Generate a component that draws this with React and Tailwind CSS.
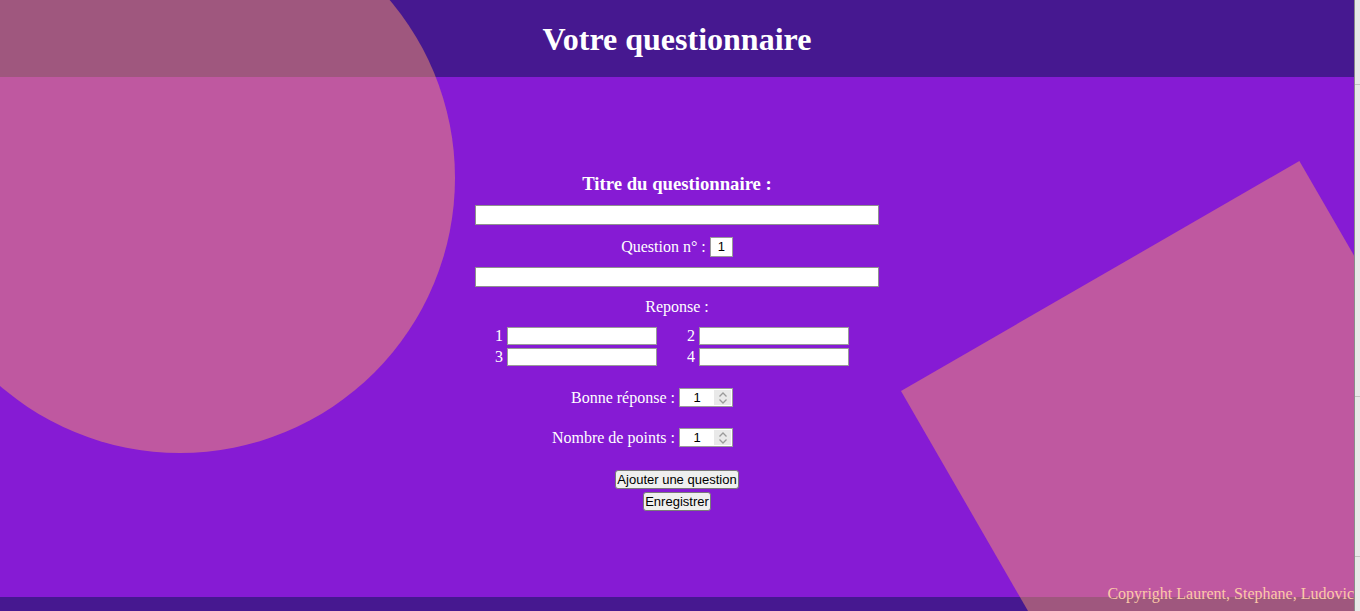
import React from "react";

const serif = { fontFamily: '"Liberation Serif", "Times New Roman", serif' };
const sans = { fontFamily: '"Liberation Sans", Arial, sans-serif' };

function NumberBox() {
  return (
    <div className="flex h-[19px] w-[54px] items-center border border-[#9a9a9a] bg-white" style={sans}>
      <div className="flex-1 text-center text-[13px] leading-[15px] text-black">1</div>
      <div className="mr-[1px] flex h-[15px] w-[17px] flex-col items-center justify-center bg-[#e9e9e9]">
        <svg width="10" height="14" viewBox="0 0 10 14" fill="none" stroke="#9a9a9a" strokeWidth="1.3">
          <path d="M1.5 5.5 L5 2 L8.5 5.5" />
          <path d="M1.5 8.5 L5 12 L8.5 8.5" />
        </svg>
      </div>
    </div>
  );
}

function Btn({ children }) {
  return (
    <button
      className="h-[19px] rounded-[3px] border border-[#7a7a7a] bg-[#efefef] px-[1px] text-[13px] leading-[15px] text-black"
      style={sans}
    >
      {children}
    </button>
  );
}

export default function App() {
  return (
    <div className="flex h-[611px] w-[1360px] overflow-hidden">
      <div className="relative flex h-[611px] w-[1354px] flex-col overflow-hidden bg-[#861bd4]">
        {/* header */}
        <header className="flex h-[77px] shrink-0 items-center justify-center bg-[#461890]">
          <h1 className="text-[32px] font-bold leading-[36px] text-white" style={serif}>
            Votre questionnaire
          </h1>
        </header>

        {/* main */}
        <main className="relative z-10 flex flex-1 flex-col items-center pt-[96px] text-white" style={serif}>
          <h3 className="text-[18.72px] font-bold leading-[22px]">Titre du questionnaire :</h3>
          <div className="mt-[10px] h-[20px] w-[404px] border border-[#909090] bg-white" />

          <div className="mt-[12px] flex items-center">
            <span className="text-[16px] leading-[18px]">Question n° :</span>
            <div
              className="ml-[4px] flex h-[20px] w-[23px] items-center justify-center border border-[#9a9a9a] bg-white text-[13px] text-black"
              style={sans}
            >
              1
            </div>
          </div>

          <div className="mt-[10px] h-[20px] w-[404px] border border-[#909090] bg-white" />

          <div className="mt-[11px] text-[16px] leading-[18px]">Reponse :</div>

          <div className="mr-[10px] mt-[11px] flex flex-col gap-[3px]">
            {[
              ["1", "2"],
              ["3", "4"],
            ].map((row) => (
              <div key={row[0]} className="flex items-center">
                <span className="w-[8px] text-[16px] leading-[18px]">{row[0]}</span>
                <div className="ml-[4px] h-[18px] w-[150px] border border-[#9a9a9a] bg-white" />
                <span className="ml-[30px] w-[8px] text-[16px] leading-[18px]">{row[1]}</span>
                <div className="ml-[4px] h-[18px] w-[150px] border border-[#9a9a9a] bg-white" />
              </div>
            ))}
          </div>

          <div className="mt-[22px] flex w-[404px] items-center justify-end pr-[146px]">
            <span className="mr-[4px] text-[16px] leading-[18px]">Bonne réponse :</span>
            <NumberBox />
          </div>

          <div className="mt-[21px] flex w-[404px] items-center justify-end pr-[146px]">
            <span className="mr-[4px] text-[16px] leading-[18px]">Nombre de points :</span>
            <NumberBox />
          </div>

          <div className="mt-[23px] flex flex-col items-center gap-[3px]">
            <Btn>Ajouter une question</Btn>
            <Btn>Enregistrer</Btn>
          </div>
        </main>

        {/* footer */}
        <footer className="relative h-[14px] shrink-0 bg-[#461890]" />

        {/* decorative shapes */}
        <div className="pointer-events-none absolute left-[-95px] top-[-97px] h-[550px] w-[550px] rounded-full bg-[#f8956c]/50" />
        <div className="pointer-events-none absolute left-[901px] top-[391px] h-[600px] w-[460px] origin-top-left -rotate-30 bg-[#f8956c]/50" />

        <div
          className="absolute bottom-[8px] right-0 z-20 text-[16px] leading-[18px] text-[#fcc9a8]"
          style={serif}
        >
          Copyright Laurent, Stephane, Ludovic
        </div>
      </div>

      {/* right strip */}
      <div className="relative h-[611px] w-[6px] border-l border-[#8a8a8a] bg-[#e8e8e8]">
        <div className="absolute left-0 right-0 top-[84px] h-px bg-[#c4c4c4]" />
        <div className="absolute left-0 right-0 top-[396px] h-px bg-[#c4c4c4]" />
        <div className="absolute left-0 right-0 top-[556px] h-px bg-[#c4c4c4]" />
      </div>
    </div>
  );
}
